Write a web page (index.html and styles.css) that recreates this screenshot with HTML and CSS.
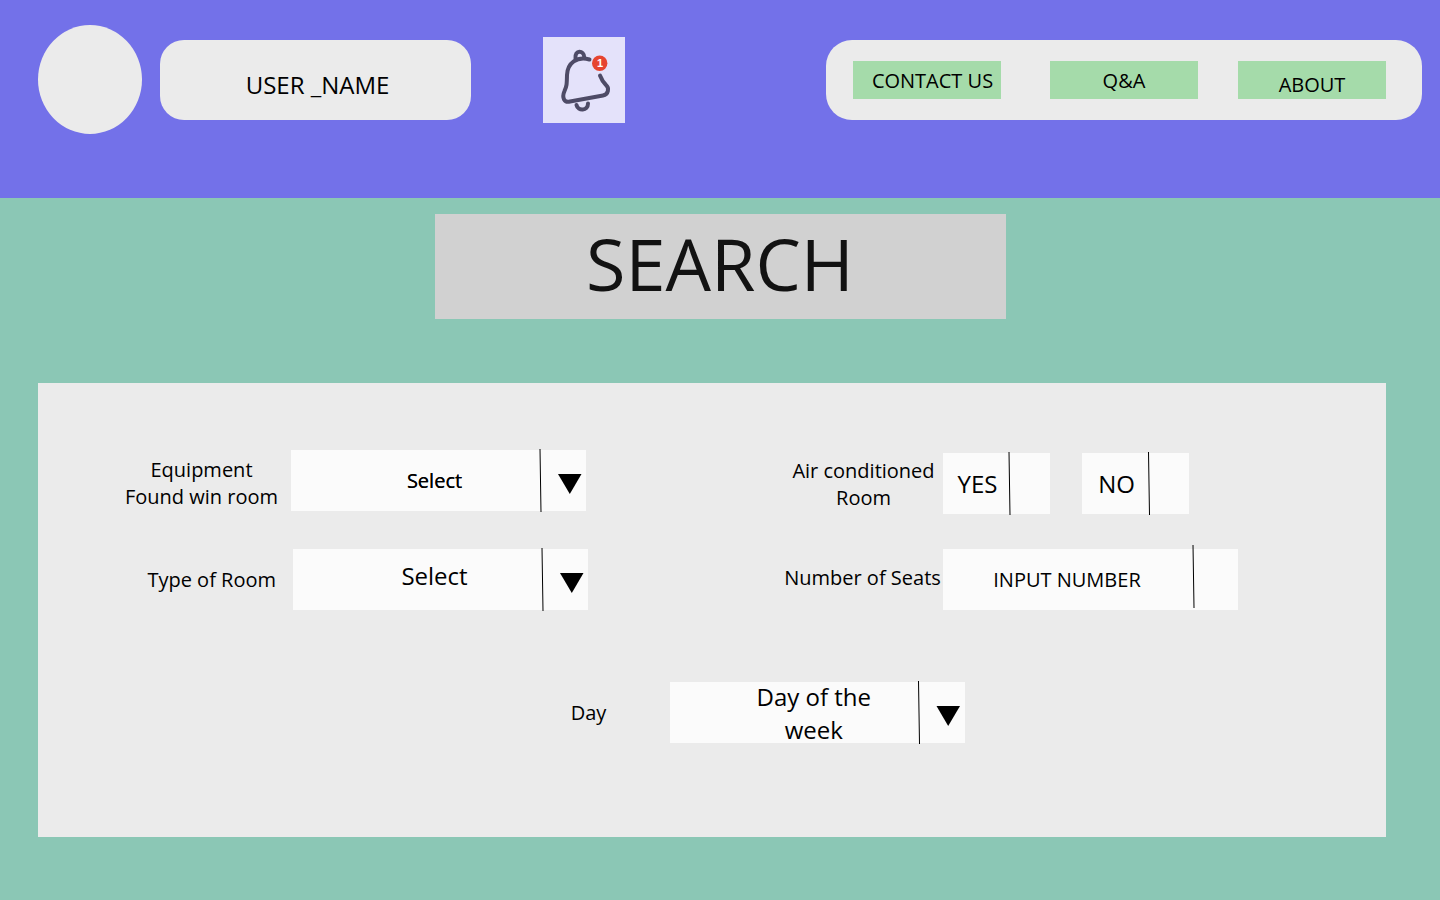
FILE: index.html
```html
<!DOCTYPE html>
<html lang="en">
<head>
<meta charset="utf-8">
<meta name="viewport" content="width=device-width, initial-scale=1">
<title>Search</title>
<link rel="stylesheet" href="styles.css">
</head>
<body>
<header class="topbar">
  <div class="avatar"></div>
  <div class="username">USER _NAME</div>
  <button class="bell" type="button" aria-label="Notifications">
    <svg viewBox="0 0 82 86" width="82" height="86">
      <g fill="none" stroke="#4e4b66" stroke-width="4" stroke-linecap="round" stroke-linejoin="round">
        <path d="M32.500 21.500C31.500 12.500 41 13 41.300 20.500"/>
        <path d="M46.500 22.500C34 19 24.500 26 24 38C23.800 49 23.500 49 21.500 54C18.500 61 21.500 66 27 64.500L60 58.500C65.500 57.500 66.500 51 63 48C60 45 58.500 42.500 57 38.500"/>
        <path d="M33.500 68C35 74.500 45 74 45 66.500"/>
      </g>
      <circle cx="56.700" cy="26.300" r="7.700" fill="#e64430"/>
      <text class="bell-count" x="57" y="30" text-anchor="middle">1</text>
    </svg>
  </button>
  <nav class="nav">
    <a class="nav-link nav-contact" href="#contact">CONTACT US</a>
    <a class="nav-link nav-qa" href="#qa">Q&amp;A</a>
    <a class="nav-link nav-about" href="#about">ABOUT</a>
  </nav>
</header>

<main>
  <h1 class="title">SEARCH</h1>

  <form class="panel">
    <div class="field equipment">
      <label class="label" for="equipment">Equipment<br>Found win room</label>
      <div class="control">
        <select class="box small" id="equipment"><option>Select</option></select>
        <svg class="arrow" viewBox="0 0 47 63" width="47" height="63"><path d="M1 0L2 63" stroke="#000"/><path d="M19 25H42.500L30.800 45Z"/></svg>
      </div>
    </div>

    <div class="field air" role="radiogroup" aria-labelledby="air-label">
      <span class="label" id="air-label">Air conditioned<br>Room</span>
      <div class="choices">
        <label class="choice"><span class="choice-text">YES</span><input class="choice-input" type="radio" name="air" value="yes"><svg class="divider" viewBox="0 0 3 63" width="3" height="63"><path d="M1 0L2 63" stroke="#000"/></svg></label>
        <label class="choice"><span class="choice-text">NO</span><input class="choice-input" type="radio" name="air" value="no"><svg class="divider" viewBox="0 0 3 63" width="3" height="63"><path d="M1.500 0L2.500 63" stroke="#000"/></svg></label>
      </div>
    </div>

    <div class="field room">
      <label class="label" for="room">Type of Room</label>
      <div class="control">
        <select class="box large" id="room"><option>Select</option></select>
        <svg class="arrow" viewBox="0 0 47 63" width="47" height="63"><path d="M1 0L2 63" stroke="#000"/><path d="M19 25H42.500L30.800 45Z"/></svg>
      </div>
    </div>

    <div class="field seats">
      <label class="label" for="seats">Number of Seats</label>
      <div class="control">
        <input class="box number" id="seats" type="text" inputmode="numeric" placeholder="INPUT NUMBER">
        <svg class="arrow raised" viewBox="0 0 47 63" width="47" height="63"><path d="M2 0L3 63" stroke="#000"/></svg>
      </div>
    </div>

    <div class="field day">
      <label class="label" for="day">Day</label>
      <div class="control">
        <select class="box wrap" id="day"><option>Day of the week</option></select>
        <svg class="arrow" viewBox="0 0 47 63" width="47" height="63"><path d="M0.500 0L1.500 63" stroke="#000"/><path d="M18.500 25H42L30.200 45Z"/></svg>
      </div>
    </div>
  </form>
</main>
</body>
</html>
```
FILE: styles.css
```css
* { box-sizing: border-box; }

body {
  margin: 0;
  min-height: 100vh;
  background: #8bc7b5;
  color: #000;
  font: 20px/27px "Open Sans", "Noto Sans", sans-serif;
}

.topbar {
  display: flex;
  align-items: center;
  padding: 25px 18px 64px 38px;
  background: #7371e9;
}

.avatar {
  width: 104px;
  height: 109px;
  border-radius: 50%;
  background: #ebebeb;
}

.username {
  width: 311px;
  margin-left: 18px;
  padding: 28px 0 19px 4px;
  border-radius: 24px;
  background: #ebebeb;
  font-size: 24px;
  line-height: 33px;
  text-align: center;
}

.bell {
  margin: 0 0 0 72px;
  padding: 0;
  border: 0;
  background: #e4e2fa;
}

.bell svg { display: block; }

.bell-count {
  fill: #fff;
  font-size: 11px;
  font-weight: 600;
}

.nav {
  display: flex;
  margin-left: auto;
  padding: 21px 36px 21px 27px;
  border-radius: 26px;
  background: #ebebeb;
}

.nav-link {
  width: 148px;
  height: 38px;
  background: #a5dbaa;
  color: #000;
  line-height: 40px;
  text-align: center;
  text-decoration: none;
}

.nav-contact { padding-left: 11px; }
.nav-qa { margin: 0 40px 0 49px; }
.nav-about { padding-top: 4px; }

.title {
  width: 571px;
  margin: 16px auto 0;
  padding-bottom: 6px;
  background: #d1d1d1;
  color: #121212;
  font-size: 72px;
  font-weight: 400;
  line-height: 99px;
  text-align: center;
}

.panel {
  display: grid;
  grid-template-columns: 11fr 10fr;
  row-gap: 35px;
  margin: 64px 54px 63px 38px;
  padding: 67px 2px 94px 86px;
  background: #ebebeb;
}

.field {
  display: flex;
  align-items: center;
  min-width: 0;
}

.label { text-align: center; }

.equipment { align-self: start; }
.equipment .label { width: 155px; margin-right: 12px; padding-top: 5px; }
.room .label { width: 152px; margin-right: 17px; text-align: right; }
.air { padding-top: 3px; }
.air .label { width: 159px; }
.seats .label { width: 157px; margin-right: 2px; padding-bottom: 4px; }

.day {
  grid-column: 1 / -1;
  justify-self: center;
  margin-top: 37px;
  padding-left: 28px;
}
.day .label { margin-right: 64px; }

.control {
  position: relative;
  width: 295px;
  background: #fbfbfb;
}

.box {
  display: block;
  width: 100%;
  height: 61px;
  margin: 0;
  border: 0;
  border-radius: 0;
  background: transparent;
  color: #000;
  font: inherit;
  text-align: center;
  text-align-last: center;
  appearance: none;
}

.small { padding: 0 8px 0 0; text-shadow: 0 0 0 #000; }
.large { padding: 0 12px 8px 0; font-size: 24px; }

.day .control { height: 61px; }
.wrap {
  height: 69px;
  margin-top: -4px;
  padding: 0 88px 0 80px;
  font-size: 24px;
  line-height: 33px;
  white-space: normal;
}
.number { padding: 0 47px 0 0; }
.number::placeholder { color: #000; opacity: 1; }

.arrow {
  position: absolute;
  top: -1px;
  right: 0;
  pointer-events: none;
}
.raised { top: -4px; }

.choices {
  display: flex;
  gap: 32px;
}

.choice {
  position: relative;
  display: flex;
  align-items: center;
  background: #fbfbfb;
  font-size: 24px;
}

.choice-text {
  width: 67px;
  padding-left: 2px;
  text-align: center;
}

.choice-input {
  width: 40px;
  height: 61px;
  margin: 0;
  appearance: none;
}
.choice-input:checked { background: #a5dbaa; }

.divider {
  position: absolute;
  top: -1px;
  right: 39px;
}
```
